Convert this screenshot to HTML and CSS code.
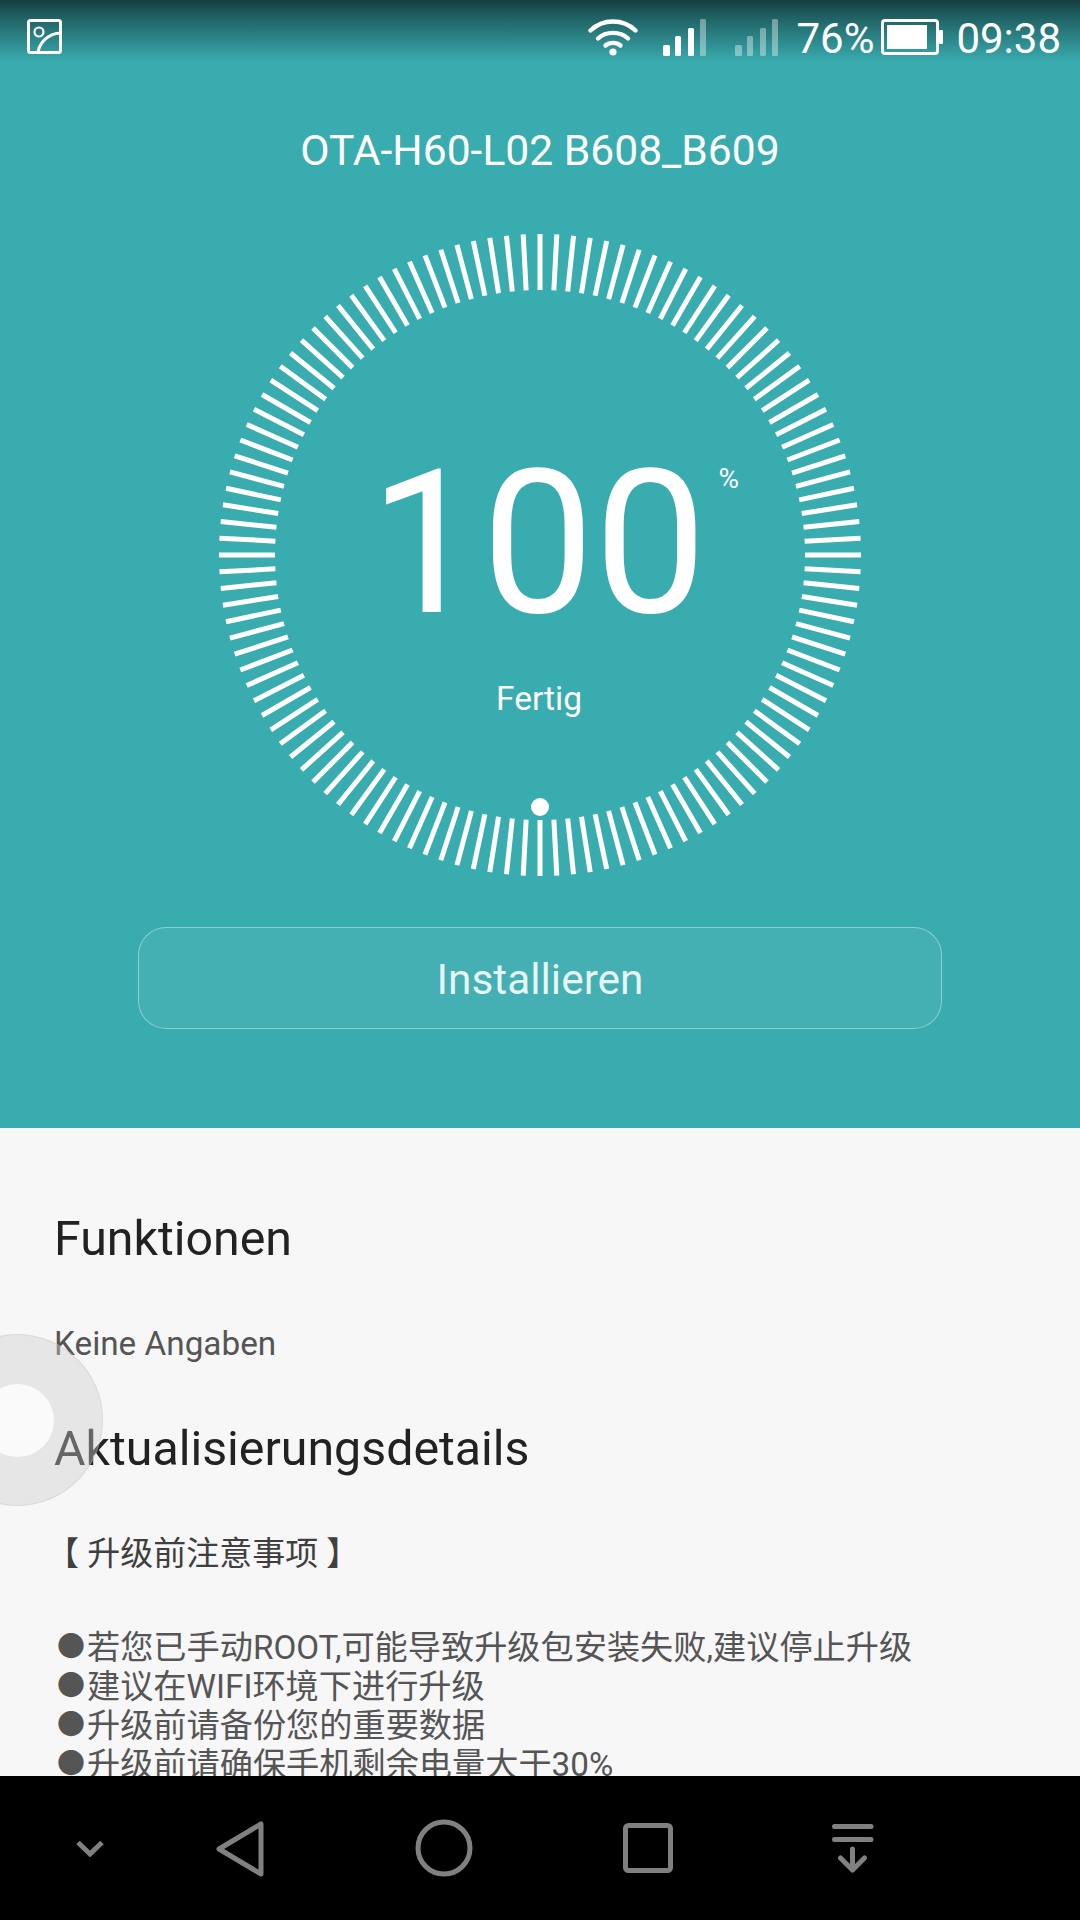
FILE: index.html
```html
<!DOCTYPE html>
<html lang="de">
<head>
<meta charset="utf-8">
<title>OTA-H60-L02 B608_B609</title>
<link rel="stylesheet" href="styles.css">
</head>
<body>
<div class="screen">
  <section class="hero">
    <header class="statusbar">
      <svg class="ic-photo" width="36" height="36" viewBox="0 0 36 36" fill="none" stroke="#fff">
        <rect x="1.5" y="1.5" width="32" height="32" rx="2" stroke-width="3"/>
        <circle cx="12" cy="13" r="4.5" stroke-width="2.2"/>
        <path d="M11 33C13 23 21 15 33 14" stroke-width="3"/>
      </svg>
      <div class="status-right">
        <svg class="ic-wifi" width="50" height="37" viewBox="0 0 50 37" fill="none" stroke="#fff" stroke-width="4.4" stroke-linecap="round">
          <path d="M2.5 11.5C15 -0.5 35 -0.5 47.5 11.5"/>
          <path d="M10 19.5C18 12 32 12 40 19.5"/>
          <path d="M17.5 26.5C21.5 23 28.5 23 32.5 26.5"/>
          <circle cx="25" cy="33" r="3.6" fill="#fff" stroke="none"/>
        </svg>
        <svg class="ic-signal" width="43" height="37" viewBox="0 0 43 37" fill="#fff">
          <rect x="0" y="26" width="7" height="11" rx="1.5"/>
          <rect x="12" y="17" width="6" height="20" rx="1.5"/>
          <rect x="25" y="9" width="6" height="28" rx="1.5"/>
          <rect x="37" y="0" width="6" height="37" rx="1.5" opacity=".38"/>
        </svg>
        <svg class="ic-signal second" width="43" height="37" viewBox="0 0 43 37" fill="#fff" opacity=".38">
          <rect x="0" y="26" width="7" height="11" rx="1.5"/>
          <rect x="12" y="17" width="6" height="20" rx="1.5"/>
          <rect x="25" y="9" width="6" height="28" rx="1.5"/>
          <rect x="37" y="0" width="6" height="37" rx="1.5"/>
        </svg>
        <span class="status-text pct">76%</span>
        <svg class="ic-battery" width="62" height="36" viewBox="0 0 62 36" fill="none">
          <rect x="1.5" y="1.5" width="55" height="33" rx="2.5" stroke="#fff" stroke-width="3"/>
          <rect x="6" y="6" width="40" height="24" fill="#fff"/>
          <rect x="58" y="11" width="4" height="14" rx="1" fill="#fff"/>
        </svg>
        <span class="status-text time">09:38</span>
      </div>
    </header>

    <h1 class="title">OTA-H60-L02 B608_B609</h1>

    <div class="gauge">
      <svg class="ticks" width="642" height="642" viewBox="-321 -321 642 642">
        <defs>
          <line id="t" x1="0" y1="-321" x2="0" y2="-265" stroke="#fff" stroke-width="5"/>
          <g id="t5">
            <use href="#t"/>
            <use href="#t" transform="rotate(3)"/>
            <use href="#t" transform="rotate(6)"/>
            <use href="#t" transform="rotate(9)"/>
            <use href="#t" transform="rotate(12)"/>
          </g>
          <g id="t30">
            <use href="#t5"/>
            <use href="#t5" transform="rotate(15)"/>
            <use href="#t5" transform="rotate(30)"/>
            <use href="#t5" transform="rotate(45)"/>
            <use href="#t5" transform="rotate(60)"/>
            <use href="#t5" transform="rotate(75)"/>
          </g>
        </defs>
        <use href="#t30"/>
        <use href="#t30" transform="rotate(90)"/>
        <use href="#t30" transform="rotate(180)"/>
        <use href="#t30" transform="rotate(270)"/>
        <circle cx="0" cy="252" r="9" fill="#fff"/>
      </svg>
      <div class="readout">
        <div class="value"><span class="num">100</span><span class="unit">%</span></div>
        <div class="state">Fertig</div>
      </div>
    </div>

    <button class="install" type="button">Installieren</button>
  </section>

  <main class="details">
    <h2 class="h-first">Funktionen</h2>
    <p class="none">Keine Angaben</p>
    <h2 class="h-second">Aktualisierungsdetails</h2>
    <p class="notice">【 升级前注意事项 】</p>
    <ul class="notes">
      <li><span class="bullet">●</span>若您已手动ROOT,可能导致升级包安装失败,建议停止升级</li>
      <li><span class="bullet">●</span>建议在WIFI环境下进行升级</li>
      <li><span class="bullet">●</span>升级前请备份您的重要数据</li>
      <li><span class="bullet">●</span>升级前请确保手机剩余电量大于30%</li>
    </ul>
  </main>

  <div class="float-ball"><div class="float-core"></div></div>

  <nav class="navbar">
    <svg class="nav-chevron" width="28" height="17" viewBox="0 0 28 17" fill="none" stroke="#808080" stroke-width="5">
      <path d="M2 2.5L14 14L26 2.5"/>
    </svg>
    <svg class="nav-back" width="48" height="56" viewBox="0 0 48 56" fill="none" stroke="#808080" stroke-width="5" stroke-linejoin="round">
      <path d="M45 3V53L3 28Z"/>
    </svg>
    <svg class="nav-home" width="58" height="58" viewBox="0 0 58 58" fill="none" stroke="#808080" stroke-width="5">
      <circle cx="29" cy="29" r="26"/>
    </svg>
    <svg class="nav-recent" width="50" height="50" viewBox="0 0 50 50" fill="none" stroke="#808080" stroke-width="5">
      <rect x="2.5" y="2.5" width="45" height="45" rx="3"/>
    </svg>
    <svg class="nav-drop" width="44" height="50" viewBox="0 0 44 50" fill="none" stroke="#808080" stroke-width="5" stroke-linecap="round">
      <path d="M4.5 3.5H41M4.5 16.5H41"/>
      <path d="M22.5 26V47M10.5 35L22.5 47L34.5 35" stroke-linejoin="round"/>
    </svg>
  </nav>
</div>
</body>
</html>
```

FILE: styles.css
```css
* { box-sizing: border-box; }
html, body { margin: 0; padding: 0; }
body { width: 1080px; height: 1920px; overflow: hidden; font-family: Roboto, "Noto Sans CJK SC", sans-serif; }

.screen { position: relative; width: 1080px; height: 1920px; display: flex; flex-direction: column; background: #f7f7f7; overflow: hidden; }

.hero { height: 1128px; flex: none; background: #39acaf; display: flex; flex-direction: column; align-items: center; color: #fff; }

.statusbar { width: 100%; height: 72px; flex: none; padding: 19px 19px 0 27px; display: flex; justify-content: space-between; align-items: flex-start; background: linear-gradient(#143c3d 0, #1c5557 10px, #39acaf 62px); }
.status-right { display: flex; align-items: flex-start; }
.status-text { font-size: 42px; font-weight: 400; line-height: 40px; }
.ic-signal { margin-left: 25px; }
.ic-signal.second { margin-left: 29px; }
.pct { margin-left: 18px; }
.ic-battery { margin-left: 7px; }
.time { margin-left: 13px; }

.title { margin: 53px 0 0; height: 50px; font-size: 42.6px; line-height: 50px; font-weight: 400; }

.gauge { position: relative; margin-top: 59px; width: 642px; height: 642px; flex: none; }
.ticks { display: block; }
.readout { position: absolute; inset: 0; display: flex; flex-direction: column; align-items: center; }
.value { position: relative; margin: 210px 4px 0 0; height: 200px; }
.num { font-size: 200px; line-height: 200px; font-weight: 400; display: block; }
.unit { position: absolute; left: 100%; top: 20px; margin-left: 12px; font-size: 28px; line-height: 30px; font-weight: 400; }
.state { margin: 35px 2px 0 0; font-size: 33.5px; line-height: 40px; font-weight: 400; }

.install { margin-top: 51px; width: 804px; height: 102px; flex: none; border: 1px solid rgba(255,255,255,.38); border-radius: 28px; background: rgba(255,255,255,.06); color: rgba(255,255,255,.88); font: 400 42.4px/1 Roboto, sans-serif; padding: 4px 0 0; }

.details { flex: 1; min-height: 0; overflow: hidden; padding: 81px 54px 0; }
h2 { margin: 0; font-size: 48.3px; line-height: 60px; font-weight: 400; color: #222; }
.none { margin: 55px 0 0; font-size: 33.3px; line-height: 40px; color: #555; }
.h-second { margin-top: 55px; }
.notice { margin: 53px 0 0 -8px; font-size: 33px; line-height: 44px; color: #3f3f3f; }
.notes { margin: 52px 0 0 1px; padding: 0; list-style: none; font-size: 33.2px; line-height: 39px; color: #555; }
.bullet { display: inline-block; width: 32px; font-size: 28px; line-height: 1; text-align: center; vertical-align: 2px; }

.float-ball { position: absolute; left: -69px; top: 1334px; width: 172px; height: 172px; border-radius: 50%; background: rgba(205,205,205,.4); border: 1px solid rgba(190,190,190,.35); display: flex; align-items: center; justify-content: center; }
.float-core { width: 73px; height: 73px; border-radius: 50%; background: rgba(255,255,255,.8); }

.navbar { position: relative; height: 144px; flex: none; background: #000; }
.navbar svg { position: absolute; }
.nav-chevron { left: 76px; top: 64px; }
.nav-back { left: 216px; top: 45px; }
.nav-home { left: 415px; top: 43px; }
.nav-recent { left: 623px; top: 47px; }
.nav-drop { left: 830px; top: 47px; }
```
